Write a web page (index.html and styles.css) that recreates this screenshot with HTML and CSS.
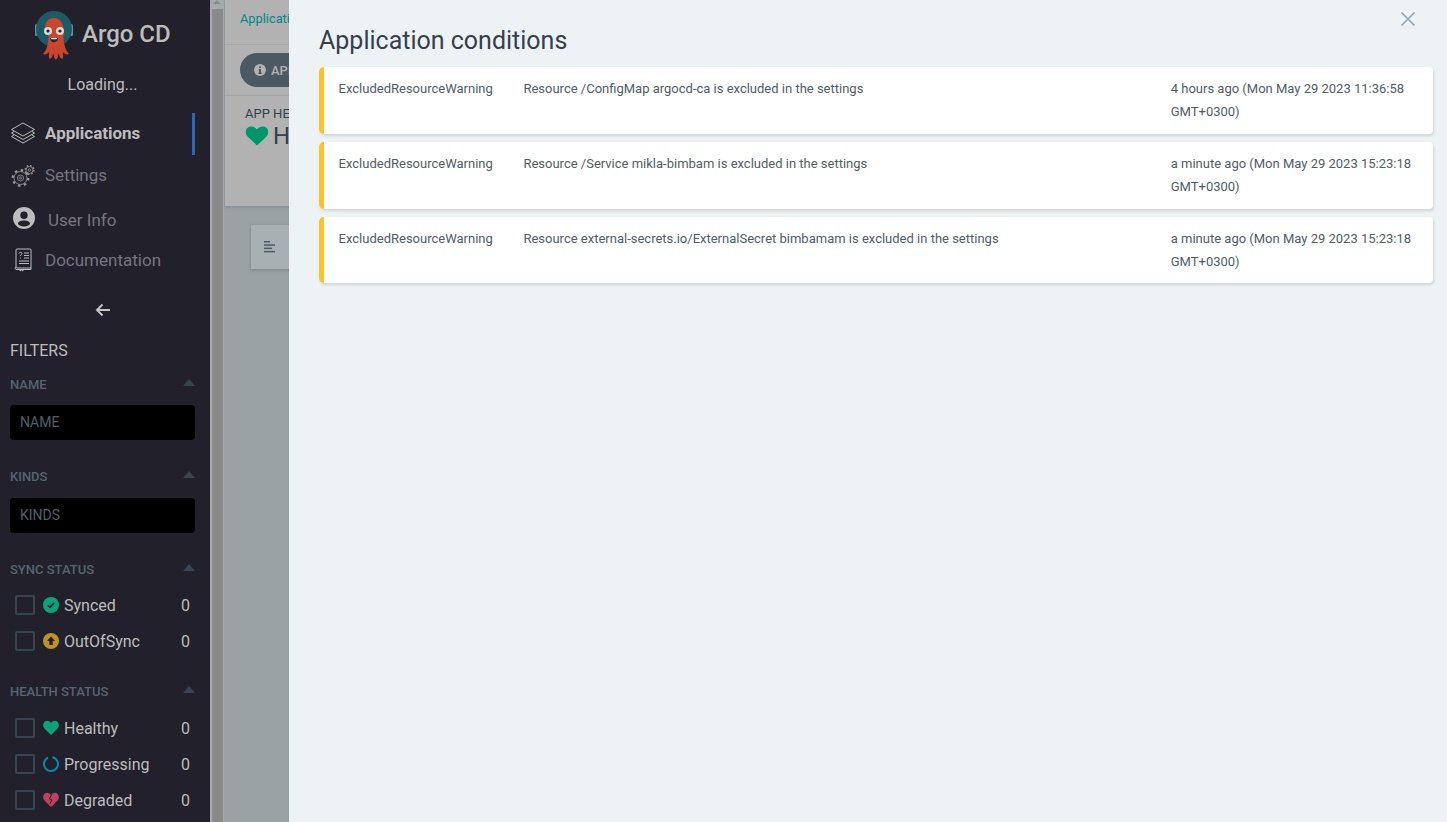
FILE: index.html
```html
<!DOCTYPE html>
<html lang="en">
<head>
    <meta charset="UTF-8">
    <meta name="viewport" content="width=device-width, initial-scale=1.0">
    <title>Argo CD</title>
    <link rel="stylesheet" href="styles.css">
</head>
<body>
    <div class="app">
        <nav class="sidebar">
            <div class="logo">
                <svg class="logo-img" width="40" height="50" viewBox="0 0 40 50">
                    <rect x="0" y="14" width="3" height="12" rx="1.500" fill="#6d8f9b"/>
                    <rect x="35" y="14" width="3" height="12" rx="1.500" fill="#6d8f9b"/>
                    <circle cx="19" cy="19" r="18" fill="#1c5a66"/>
                    <path d="M9.500 22c0-9 3-14 9.500-14s9.500 5 9.500 14c0 6 0 10 1 13 1 4 2.500 7 4.500 9-2 1-4.500 0-6-2 0 3 .5 5-.5 7-2 0-3-3-4-6-.5 3-1 6.500-2.500 6.500s-2-3.500-2.500-6.500c-1 3-2 6-4 6-1-2-.5-4-.5-7-1.500 2-4 3-6 2 2-2 3.500-5 4.500-9 1-3 1-7 1-13z" fill="#c9452d"/>
                    <circle cx="13" cy="21" r="4" fill="#dcdad6"/>
                    <circle cx="25" cy="21" r="4" fill="#dcdad6"/>
                    <circle cx="13" cy="21" r="1.600" fill="#26242c"/>
                    <circle cx="25" cy="21" r="1.600" fill="#26242c"/>
                    <path d="M15 28h8c-.5 3-2 4.200-4 4.200s-3.500-1.200-4-4.200z" fill="#26242c"/>
                    <path d="M16 28h6l-.4 1.300h-5.200z" fill="#f1efe9"/>
                </svg>
                <span class="logo-text">Argo CD</span>
            </div>
            <div class="version">Loading...</div>

            <a class="nav-item nav-active nav-raised">
                <svg class="nav-icon" width="25" height="24" viewBox="0 0 25 24" fill="none" stroke="#bdbdbd" stroke-width="1" stroke-linejoin="round">
                    <path d="M13 1 24.500 7.500 13 14 1.500 7.500z"/>
                    <path d="M4 9.500 1.500 11 13 17.500 24.500 11 22 9.500"/>
                    <path d="M4 13 1.500 14.500 13 21 24.500 14.500 22 13"/>
                </svg>
                <span>Applications</span>
            </a>
            <a class="nav-item nav-raised">
                <svg class="nav-icon" width="25" height="24" viewBox="0 0 25 24" fill="none" stroke="#9a9a9a">
                    <circle cx="10.500" cy="14" r="6.500" stroke-width=".8"/>
                    <circle cx="10.500" cy="14" r="7.800" stroke-width="2.200" stroke-dasharray="2.500 3.625"/>
                    <circle cx="10.500" cy="14" r="3" stroke-width=".8"/>
                    <circle cx="10.500" cy="14" r="1" stroke-width=".8"/>
                    <circle cx="19.500" cy="6" r="3.500" stroke-width=".8"/>
                    <circle cx="19.500" cy="6" r="4.400" stroke-width="1.400" stroke-dasharray="1.600 1.855"/>
                    <circle cx="19.500" cy="6" r="1.300" stroke-width=".8"/>
                </svg>
                <span>Settings</span>
            </a>
            <a class="nav-item nav-user">
                <svg class="nav-icon" width="24" height="24" viewBox="0 0 24 24">
                    <path fill="#bdbdbd" fill-rule="evenodd" d="M12 1a11 11 0 1 1 0 22 11 11 0 0 1 0-22zm0 4.500a3.700 3.700 0 1 0 0 7.400 3.700 3.700 0 0 0 0-7.400zM12 14.500c-3 0-6 1.300-6 3v.8a9 9 0 0 0 12 0v-.8c0-1.700-3-3-6-3z"/>
                </svg>
                <span>User Info</span>
            </a>
            <a class="nav-item">
                <svg class="nav-icon" width="25" height="24" viewBox="0 0 25 24" fill="none" stroke="#bdbdbd" stroke-width="1">
                    <path d="M7 1h13a1 1 0 0 1 1 1v18H7a1 1 0 0 1-1-1V2a1 1 0 0 1 1-1z"/>
                    <path d="M6 19a1 1 0 0 0 1 2.500h14V20"/>
                    <path d="M14 5h5M14 7.500h5M14 10h5M9 13h10M9 15.500h10"/>
                    <path d="M9 5.500c0-1.500 3-1.500 3 0 0 1-1.500 1-1.500 2.500M10.500 9.500v1"/>
                    <path d="M10 21v2l1.500-1 1.500 1v-2"/>
                </svg>
                <span>Documentation</span>
            </a>

            <div class="collapse-arrow">
                <svg width="16" height="14" viewBox="0 0 16 14" fill="none" stroke="#c4c4c4" stroke-width="2">
                    <path d="M15 7H2M7.500 1.500 2 7l5.500 5.500"/>
                </svg>
            </div>

            <div class="filters-title">FILTERS</div>

            <div class="filter-head filter-name"><span>NAME</span><i class="caret"></i></div>
            <div class="filter-input">NAME</div>

            <div class="filter-head filter-kinds"><span>KINDS</span><i class="caret"></i></div>
            <div class="filter-input">KINDS</div>

            <div class="filter-head filter-sync"><span>SYNC STATUS</span><i class="caret"></i></div>
            <div class="filter-row">
                <i class="checkbox"></i>
                <svg class="status-icon" width="16" height="16" viewBox="0 0 16 16">
                    <circle cx="8" cy="8" r="8" fill="#0da37a"/>
                    <path d="M4.800 8.200 7 10.300l4.200-4.400" fill="none" stroke="#22202b" stroke-width="1.600"/>
                </svg>
                <span class="filter-label">Synced</span><span class="filter-count">0</span>
            </div>
            <div class="filter-row">
                <i class="checkbox"></i>
                <svg class="status-icon" width="16" height="16" viewBox="0 0 16 16">
                    <circle cx="8" cy="8" r="8" fill="#bd9320"/>
                    <path d="M8 3.500 12 8H9.700v4H6.300V8H4z" fill="#22202b"/>
                </svg>
                <span class="filter-label">OutOfSync</span><span class="filter-count">0</span>
            </div>

            <div class="filter-head filter-health"><span>HEALTH STATUS</span><i class="caret"></i></div>
            <div class="filter-row">
                <i class="checkbox"></i>
                <svg class="status-icon" width="16" height="16" viewBox="0 0 24 24">
                    <path d="M12 22.500 2.500 13C-.5 10-.5 5.500 2 3c2.700-2.700 7-2.400 10 1.500C15 .6 19.300.3 22 3c2.500 2.500 2.500 7-.5 10z" fill="#0da37a"/>
                </svg>
                <span class="filter-label">Healthy</span><span class="filter-count">0</span>
            </div>
            <div class="filter-row">
                <i class="checkbox"></i>
                <svg class="status-icon" width="16" height="16" viewBox="0 0 16 16">
                    <path d="M9.500 1.200A7 7 0 1 1 5 1.700" fill="none" stroke="#0c85ad" stroke-width="2"/>
                </svg>
                <span class="filter-label">Progressing</span><span class="filter-count">0</span>
            </div>
            <div class="filter-row">
                <i class="checkbox"></i>
                <svg class="status-icon" width="16" height="16" viewBox="0 0 24 24">
                    <path d="M12 22.500 2.500 13C-.5 10-.5 5.500 2 3c2.700-2.700 7-2.400 10 1.500C15 .6 19.300.3 22 3c2.500 2.500 2.500 7-.5 10z" fill="#c2405f"/>
                    <path d="M13 4 9.500 10l4 2-3 5 .5 1" fill="none" stroke="#22202b" stroke-width="1.500"/>
                </svg>
                <span class="filter-label">Degraded</span><span class="filter-count">0</span>
            </div>
        </nav>

        <div class="scrollbar">
            <i class="scroll-arrow"></i>
            <div class="scroll-thumb"></div>
        </div>

        <main class="content">
            <div class="topbar">
                <div class="breadcrumb">Applications</div>
                <div class="toolbar">
                    <span class="pill">
                        <svg width="12" height="12" viewBox="0 0 12 12">
                            <circle cx="6" cy="6" r="6" fill="#b2b2b2"/>
                            <path d="M5 2.500h2v1.500H5zM4.700 5h2.300v3.500h.6V10H4.500V8.500H5V6.300h-.3z" fill="#4b5a62"/>
                        </svg>
                        APP DETAILS
                    </span>
                </div>
                <div class="app-health">
                    <div class="health-label">APP HEALTH</div>
                    <div class="health-value">
                        <svg width="24" height="20" viewBox="0 0 24 21">
                            <path d="M12 20.500 2.500 11.500C-.5 8.500-.5 4.500 2 2.200c2.700-2.500 7-2 10 1.300 3-3.300 7.300-3.800 10-1.300 2.500 2.300 2.500 6.300-.5 9.300z" fill="#00956b"/>
                        </svg>
                        Healthy
                    </div>
                </div>
            </div>
            <div class="view-switch">
                <svg width="12" height="12" viewBox="0 0 12 12" fill="#4b5a62">
                    <rect x="0" y="0" width="6" height="1.500"/>
                    <rect x="0" y="3.300" width="11" height="1.500"/>
                    <rect x="0" y="6.600" width="8" height="1.500"/>
                    <rect x="0" y="9.900" width="11" height="1.500"/>
                </svg>
            </div>
        </main>

        <section class="panel">
            <svg class="panel-close" width="16" height="16" viewBox="0 0 16 16" fill="none" stroke="#8fa4b1" stroke-width="1.500">
                <path d="M1.500 1.500l13 13M14.500 1.500l-13 13"/>
            </svg>
            <h4 class="panel-title">Application conditions</h4>
            <div class="condition">
                <div>ExcludedResourceWarning</div>
                <div>Resource /ConfigMap argocd-ca is excluded in the settings</div>
                <div>4 hours ago (Mon May 29 2023 11:36:58 GMT+0300)</div>
            </div>
            <div class="condition">
                <div>ExcludedResourceWarning</div>
                <div>Resource /Service mikla-bimbam is excluded in the settings</div>
                <div>a minute ago (Mon May 29 2023 15:23:18 GMT+0300)</div>
            </div>
            <div class="condition">
                <div>ExcludedResourceWarning</div>
                <div>Resource external-secrets.io/ExternalSecret bimbamam is excluded in the settings</div>
                <div>a minute ago (Mon May 29 2023 15:23:18 GMT+0300)</div>
            </div>
        </section>
    </div>
</body>
</html>
```

FILE: styles.css
```css
* {
    box-sizing: border-box;
}
html, body {
    margin: 0;
    height: 100%;
    overflow: hidden;
    font-family: Roboto, "Liberation Sans", sans-serif;
}
.app {
    position: relative;
    display: flex;
    height: 822px;
    overflow: hidden;
    background: #9aa1a4;
}

/* sidebar */
.sidebar {
    width: 210px;
    flex: none;
    height: 822px;
    overflow: hidden;
    padding: 0 15px 0 10px;
    background: #22202b;
    color: #bdbdbd;
}
.logo {
    display: flex;
    align-items: flex-start;
    height: 60px;
    padding: 10px 0 0 25px;
}
.logo-img {
    flex: none;
}
.logo-text {
    margin: 8px 0 0 7px;
    font-size: 24px;
    line-height: 32px;
    font-weight: 500;
    color: #bcbcbc;
}
.version {
    height: 53px;
    padding-top: 15px;
    font-size: 16px;
    line-height: 20px;
    text-align: center;
    color: #bdbdbd;
}
.nav-item {
    display: flex;
    align-items: center;
    height: 42px;
    font-size: 17px;
    color: #76767e;
}
.nav-active {
    border-right: 3px solid #2f66b0;
    font-weight: 700;
    color: #bdbdbd;
}
.nav-raised span {
    margin-bottom: 2px;
}
.nav-icon {
    flex: none;
    margin-right: 10px;
}
.nav-user {
    height: 46px;
}
.nav-user .nav-icon {
    margin: 0 12px 4px 2px;
}
.nav-user + .nav-item {
    height: 34px;
}
.collapse-arrow {
    display: flex;
    justify-content: center;
    height: 20px;
    margin-top: 23px;
    align-items: center;
}
.filters-title {
    margin-top: 21px;
    font-size: 16px;
    line-height: 20px;
    color: #bdbdbd;
}
.filter-head {
    display: flex;
    justify-content: space-between;
    align-items: center;
    height: 16px;
    font-size: 13px;
    font-weight: 500;
    color: #55656f;
}
.filter-name {
    margin-top: 15px;
}
.filter-kinds {
    margin-top: 28px;
}
.filter-sync {
    margin-top: 28px;
    margin-bottom: 10px;
}
.filter-health {
    margin-top: 24px;
    margin-bottom: 11px;
}
.caret {
    width: 0;
    height: 0;
    margin-bottom: 4px;
    border-left: 6px solid transparent;
    border-right: 6px solid transparent;
    border-bottom: 7px solid #36454f;
}
.filter-input {
    height: 35px;
    margin-top: 13px;
    padding-left: 10px;
    border-radius: 4px;
    background: #000;
    font-size: 14px;
    line-height: 34px;
    color: #4f5f6a;
}
.filter-kinds + .filter-input {
    margin-top: 14px;
}
.filter-row {
    display: flex;
    align-items: center;
    height: 36px;
    padding-left: 5px;
    padding-right: 5px;
    font-size: 16px;
    color: #bdbdbd;
}
.checkbox {
    flex: none;
    width: 20px;
    height: 20px;
    margin-right: 8px;
    border: 2px solid #36454f;
    border-radius: 2px;
}
.status-icon {
    flex: none;
    margin-right: 5px;
}
.filter-label {
    flex: 1;
}

/* page scrollbar, dimmed by the backdrop */
.scrollbar {
    position: relative;
    width: 14px;
    flex: none;
    padding: 9px 1px 0 1px;
    border-left: 1px solid #a9a9a9;
    background: #a8aaaa;
}
.scroll-arrow {
    position: absolute;
    top: 0;
    left: 2px;
    width: 0;
    height: 0;
    border-left: 4px solid transparent;
    border-right: 4px solid transparent;
    border-bottom: 4px solid #8a8a8a;
}
.scroll-thumb {
    height: 100%;
    background: #8a8a8a;
}

/* page under the panel */
.content {
    flex: 1;
    min-width: 0;
    margin-left: 1px;
}
.topbar {
    height: 206px;
    background: #b2b2b2;
    box-shadow: 0 1px 3px rgba(0, 0, 0, .15);
}
.breadcrumb {
    height: 45px;
    padding: 11px 0 0 15px;
    border-bottom: 1px solid #a6a6a6;
    font-size: 12.8px;
    line-height: 15px;
    color: #008a8a;
}
.toolbar {
    height: 51px;
    padding: 8px 0 0 15px;
    border-bottom: 1px solid #a6a6a6;
}
.pill {
    display: inline-flex;
    align-items: center;
    gap: 5px;
    height: 34px;
    padding: 0 14px;
    border-radius: 17px;
    background: #4b5a62;
    color: #b2b2b2;
    font-size: 13px;
    font-weight: 500;
    white-space: nowrap;
}
.app-health {
    padding: 10px 0 0 20px;
    color: #33404a;
}
.health-label {
    margin-bottom: 1px;
    font-size: 13px;
    line-height: 15px;
}
.health-value {
    display: flex;
    align-items: center;
    gap: 4px;
    font-size: 24px;
    line-height: 28px;
}
.view-switch {
    display: flex;
    align-items: center;
    width: 200px;
    height: 44px;
    margin: 19px 0 0 26px;
    padding-left: 13px;
    background: #a9b0b3;
    box-shadow: 0 1px 3px rgba(0, 0, 0, .2);
}

/* slide-over panel */
.panel {
    position: absolute;
    top: 0;
    left: 289px;
    right: 0;
    bottom: 0;
    padding: 0 14px 0 30px;
    background: #edf2f5;
}
.panel-close {
    position: absolute;
    top: 11px;
    right: 31px;
}
.panel-title {
    margin: 0;
    height: 67px;
    padding-top: 25px;
    font-size: 25px;
    line-height: 32px;
    font-weight: 400;
    color: #363f4d;
}
.condition {
    display: grid;
    grid-template-columns: 2fr 7fr 3fr;
    height: 67px;
    margin-bottom: 8px;
    padding-top: 10px;
    border-left: 5px solid #fcc22b;
    border-radius: 5px 4px 4px 5px;
    background: #fff;
    box-shadow: 1px 2px 3px rgba(0, 0, 0, .12);
    font-size: 13px;
    line-height: 23px;
    color: #4f5d69;
}
.condition:last-child {
    height: 66px;
}
.condition div {
    padding: 0 15px 0 14.6px;
}
.condition div:last-child {
    padding-left: 15px;
}
```
